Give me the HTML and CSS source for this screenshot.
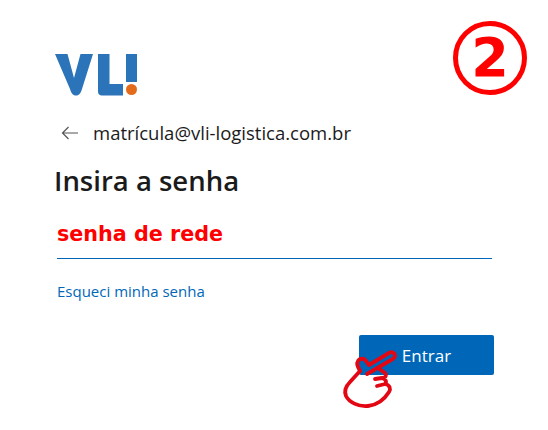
FILE: index.html
```html
<!DOCTYPE html>
<html lang="pt-BR">
<head>
    <meta charset="UTF-8">
    <meta name="viewport" content="width=device-width, initial-scale=1.0">
    <title>Entrar</title>
    <link rel="stylesheet" href="styles.css">
</head>
<body>
    <main class="page">
        <svg class="logo" width="84" height="44" viewBox="0 0 84 44" aria-label="VL!">
            <path class="logo-blue" d="M0 1h12.500l6.500 24 6.500-24H38L27 36c-1.500 5-3.500 6.500-6 6.500s-4.500-1.500-6-6.500z"/>
            <path class="logo-blue" d="M43 1h11.500v30H68v11.500H47c-2.500 0-4-1.500-4-4z"/>
            <path class="logo-blue" d="M71 1h11v28H71z"/>
            <circle class="logo-dot" cx="76.500" cy="36.500" r="5.500"/>
        </svg>

        <div class="identity">
            <svg class="back-arrow" width="18" height="14" viewBox="0 0 18 14">
                <path d="M17 7H1.500M7.500 1 1.500 7l6 6"/>
            </svg>
            <span class="email">matrícula@vli-logistica.com.br</span>
        </div>

        <h1 class="title">Insira a senha</h1>

        <div class="password-field">senha de rede</div>

        <a class="forgot" href="#">Esqueci minha senha</a>

        <div class="actions">
            <button class="submit" type="button">Entrar</button>
        </div>
    </main>

    <div class="step-badge">2</div>

    <svg class="hand" width="60" height="65" viewBox="0 0 60 65">
        <path d="M20 26C18 22 16 19 18 16 20 13 24 13 26 16L29 20 49 8C52 6 55 8 55 11 55 13 53 14 51 15L27 29"/>
        <path d="M38 23 45 28C47 31 45 33 42 33L35 34M42 33C46 34 47 37 45 39L37 41M45 39C50 40 51 44 49 47 44 55 37 60 28 61 18 62 9 57 6 51 4 46 6 41 10 37L20 26"/>
    </svg>
</body>
</html>
```

FILE: styles.css
```css
body {
    margin: 0;
    background-color: #fff;
    font-family: "Open Sans", sans-serif;
    color: #1b1b1b;
}
.page {
    width: 548px;
    height: 430px;
    box-sizing: border-box;
    padding: 53px 54px 0 55px;
    overflow: hidden;
}
.logo {
    display: block;
}
.logo-blue {
    fill: #2b74b9;
}
.logo-dot {
    fill: #e36c1c;
}
.identity {
    display: flex;
    align-items: center;
    gap: 14px;
    margin-top: 24px;
    padding-left: 6px;
    height: 22px;
}
.back-arrow {
    margin-top: 2px;
    fill: none;
    stroke: #555;
    stroke-width: 1.200;
}
.email {
    font-size: 18.500px;
    white-space: nowrap;
}
.title {
    margin: 21px 0 0 -1px;
    font-size: 27.500px;
    font-weight: 600;
    line-height: 34px;
}
.password-field {
    width: 435px;
    margin: 18px 0 0 2px;
    box-sizing: border-box;
    height: 43px;
    border-bottom: 1px solid #0067b8;
    color: #f00;
    font-family: "DejaVu Sans", sans-serif;
    font-size: 20.700px;
    font-weight: 700;
    line-height: 36px;
}
.forgot {
    display: block;
    margin: 23px 0 0 2px;
    font-size: 15px;
    line-height: 18px;
    color: #0067b8;
    text-decoration: none;
}
.actions {
    display: flex;
    justify-content: flex-end;
    margin-top: 35px;
}
.submit {
    width: 135px;
    height: 40px;
    border: none;
    border-radius: 2px;
    background-color: #0067b8;
    color: #fff;
    font-family: inherit;
    font-size: 17px;
}
.step-badge {
    position: absolute;
    left: 453px;
    top: 21px;
    width: 74px;
    height: 74px;
    box-sizing: border-box;
    border: 5px solid #f00;
    border-radius: 50%;
    color: #f00;
    font-family: "DejaVu Sans", sans-serif;
    font-size: 54px;
    font-weight: 700;
    line-height: 63px;
    text-align: center;
}
.hand {
    position: absolute;
    left: 340px;
    top: 345px;
    fill: none;
    stroke: #e30613;
    stroke-width: 3.800;
    stroke-linejoin: round;
    stroke-linecap: round;
}
```
